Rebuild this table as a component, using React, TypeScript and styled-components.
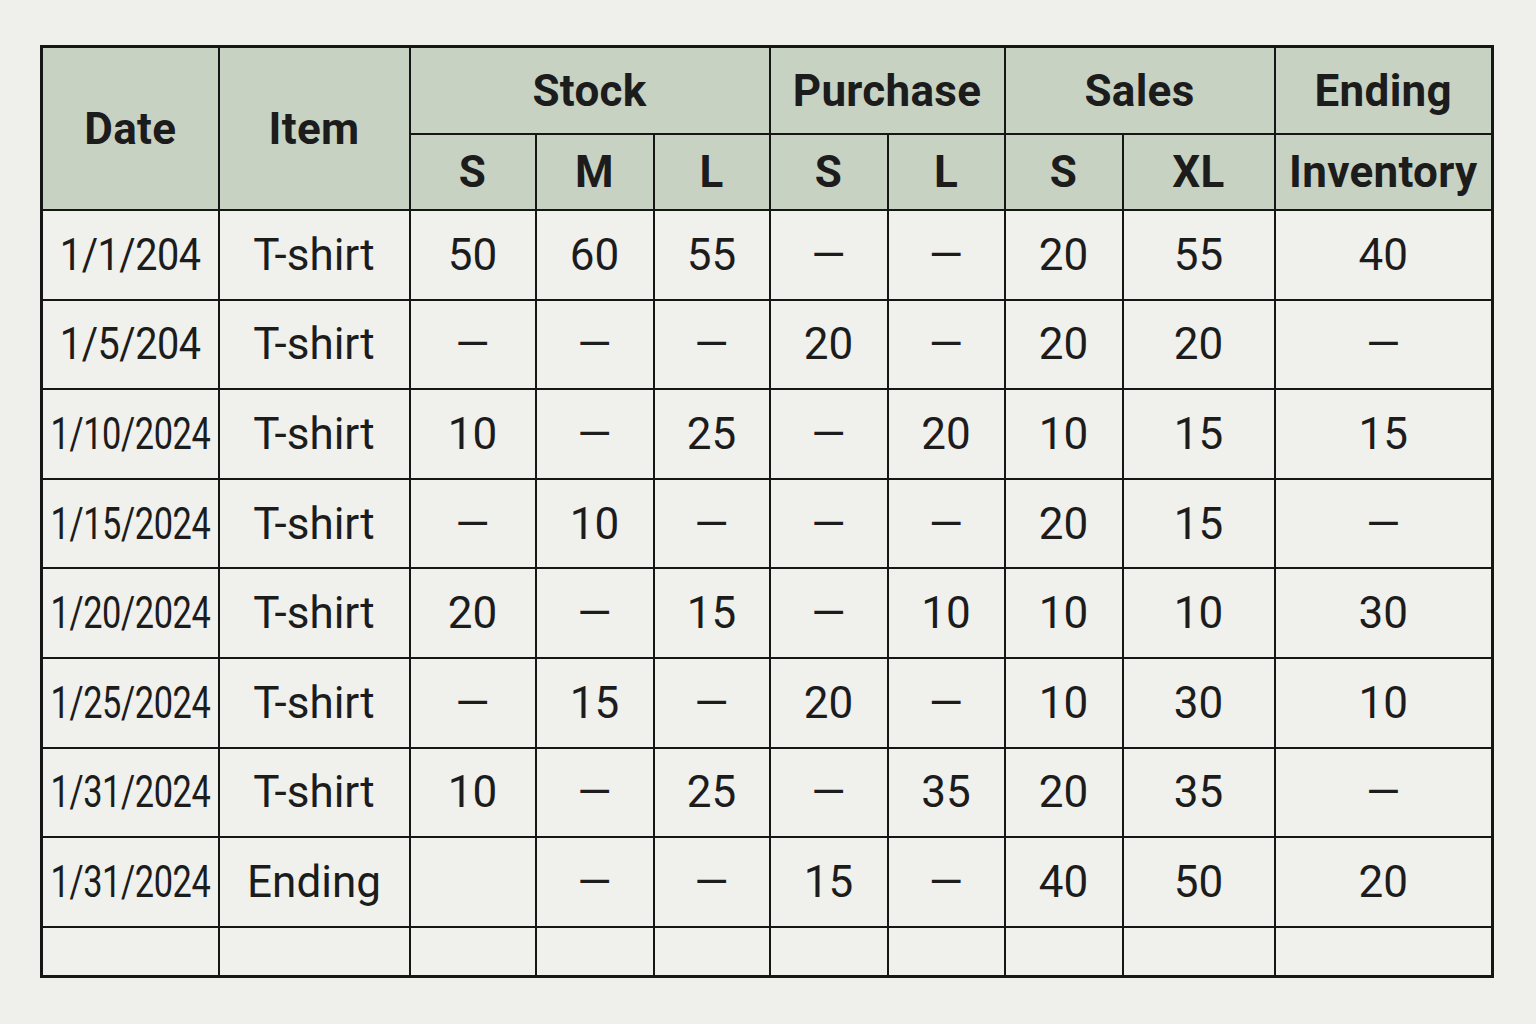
import React from "react";
import styled, { createGlobalStyle } from "styled-components";

const Global = createGlobalStyle`
  html, body { margin: 0; padding: 0; background: #efefeb; }
  body { font-family: Roboto, "Liberation Sans", sans-serif; color: #1c1c1c; }
`;

const Page = styled.div`
  width: 1536px;
  height: 1024px;
  box-sizing: border-box;
  padding: 45px 43px 0 40px;
`;

const Table = styled.table`
  width: 1451px;
  table-layout: fixed;
  border-collapse: collapse;
  border: 3px solid #161616;
  background: #f0f0ec;
`;

const HeadCell = styled.th<{ $h?: number }>`
  background: #c8d2c3;
  border: 2px solid #161616;
  font-weight: 700;
  font-size: 44px;
  text-align: center;
  vertical-align: middle;
  padding: 0;
  height: ${(p) => p.$h ?? 86}px;
  white-space: nowrap;
  overflow: hidden;
  letter-spacing: 0.3px;
`;

const Row = styled.tr<{ $h?: number }>`
  height: ${(p) => p.$h ?? 89.6}px;
`;

const Cell = styled.td`
  border: 2px solid #161616;
  font-size: 44px;
  font-weight: 400;
  text-align: center;
  vertical-align: middle;
  padding: 0;
  white-space: nowrap;
`;

const DateBox = styled.div`
  display: flex;
  justify-content: center;
  width: 100%;
`;

const DateText = styled.span<{ $scale: number }>`
  flex: none;
  display: inline-block;
  transform: scaleX(${(p) => p.$scale});
  transform-origin: center;
  letter-spacing: -0.5px;
`;

const Dash = styled.span`
  font-size: 44px;
`;

const widths = [177, 191, 126, 118, 116, 118, 117, 118, 152, 218];

const D = "—";
const rows: string[][] = [
  ["1/1/204", "T-shirt", "50", "60", "55", D, D, "20", "55", "40"],
  ["1/5/204", "T-shirt", D, D, D, "20", D, "20", "20", D],
  ["1/10/2024", "T-shirt", "10", D, "25", D, "20", "10", "15", "15"],
  ["1/15/2024", "T-shirt", D, "10", D, D, D, "20", "15", D],
  ["1/20/2024", "T-shirt", "20", D, "15", D, "10", "10", "10", "30"],
  ["1/25/2024", "T-shirt", D, "15", D, "20", D, "10", "30", "10"],
  ["1/31/2024", "T-shirt", "10", D, "25", D, "35", "20", "35", D],
  ["1/31/2024", "Ending", "", D, D, "15", D, "40", "50", "20"],
];

export default function App() {
  return (
    <Page>
      <Global />
      <Table>
        <colgroup>
          {widths.map((w, i) => (
            <col key={i} style={{ width: w }} />
          ))}
        </colgroup>
        <thead>
          <tr>
            <HeadCell rowSpan={2} $h={85}>Date</HeadCell>
            <HeadCell rowSpan={2} $h={85}>Item</HeadCell>
            <HeadCell colSpan={3} $h={85}>Stock</HeadCell>
            <HeadCell colSpan={2} $h={85}>Purchase</HeadCell>
            <HeadCell colSpan={2} $h={85}>Sales</HeadCell>
            <HeadCell $h={85}>Ending</HeadCell>
          </tr>
          <tr>
            <HeadCell $h={74}>S</HeadCell>
            <HeadCell $h={74}>M</HeadCell>
            <HeadCell $h={74}>L</HeadCell>
            <HeadCell $h={74}>S</HeadCell>
            <HeadCell $h={74}>L</HeadCell>
            <HeadCell $h={74}>S</HeadCell>
            <HeadCell $h={74}>XL</HeadCell>
            <HeadCell $h={74}>Inventory</HeadCell>
          </tr>
        </thead>
        <tbody>
          {rows.map((r, i) => (
            <Row key={i}>
              {r.map((v, j) => (
                <Cell key={j}>
                  {j === 0 ? (
                    <DateBox>
                      <DateText $scale={v.length > 7 ? 0.78 : 0.9}>{v}</DateText>
                    </DateBox>
                  ) : v === D ? (
                    <Dash>{v}</Dash>
                  ) : (
                    v
                  )}
                </Cell>
              ))}
            </Row>
          ))}
          <Row $h={50}>
            {widths.map((_, j) => (
              <Cell key={j} />
            ))}
          </Row>
        </tbody>
      </Table>
    </Page>
  );
}
